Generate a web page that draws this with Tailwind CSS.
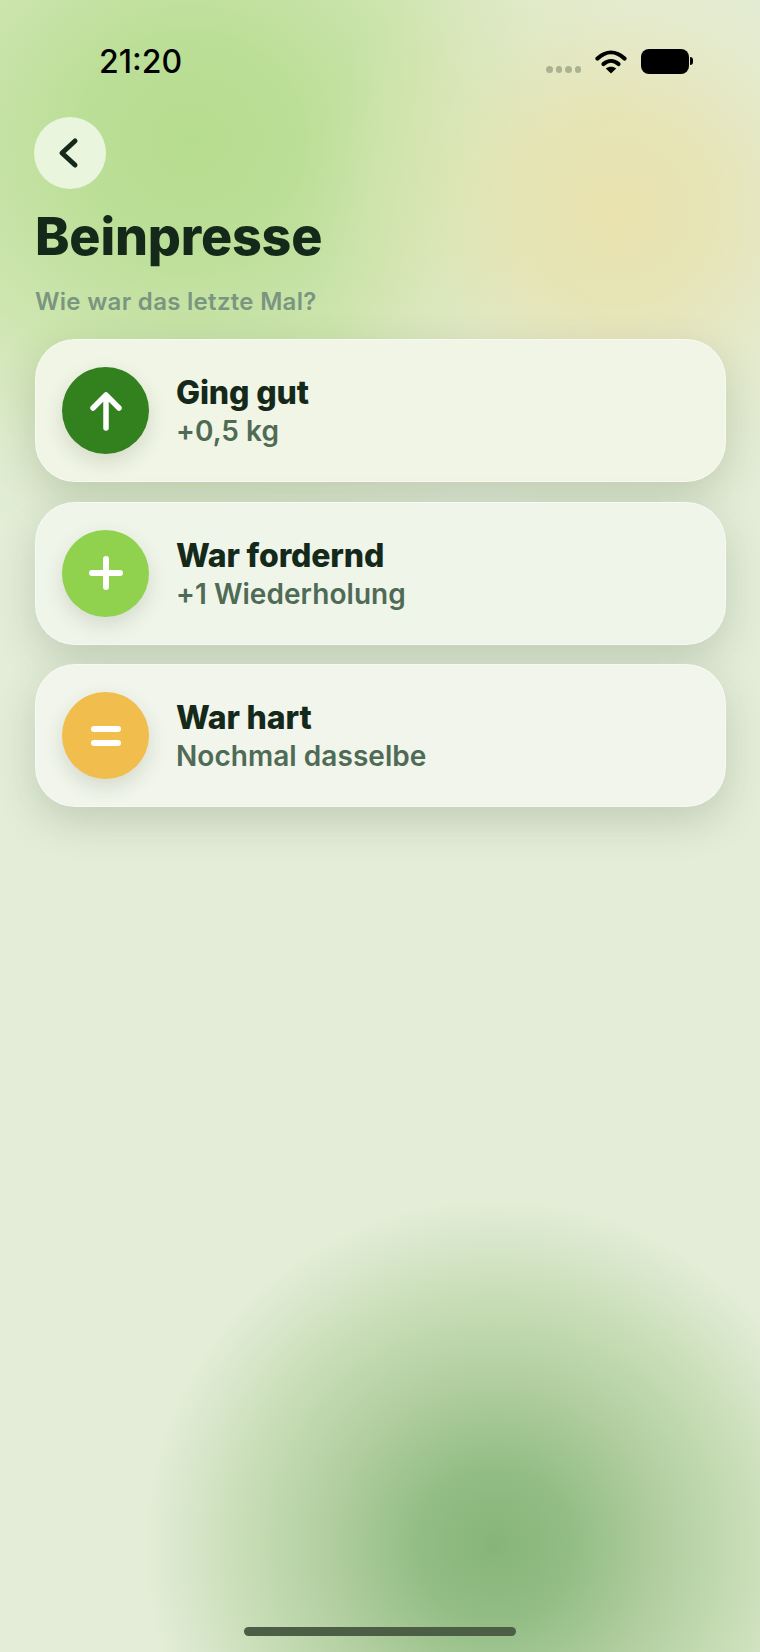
<!DOCTYPE html>
<html lang="de">
  <head>
    <meta charset="UTF-8" />
    <meta name="viewport" content="width=device-width, initial-scale=1.0" />
    <title>Beinpresse</title>
    <script src="https://cdn.jsdelivr.net/npm/@tailwindcss/browser@4"></script>
  </head>
  <body class="bg-[#e3edd8] font-['Inter',sans-serif]">
    <div class="relative w-[760px] h-[1652px] overflow-hidden">
      <!-- background blobs -->
      <div class="absolute left-[-270px] top-[-290px] w-[920px] h-[860px] rounded-full bg-[radial-gradient(closest-side,#b6dc8e_0%,#bcdf98_25%,#cbe4aae0_55%,#d8e9c070_80%,#e3edd800_100%)]"></div>
      <div class="absolute left-[310px] top-[-100px] w-[620px] h-[620px] rounded-full bg-[radial-gradient(closest-side,#e9e2ad_0%,#e8e3b0d0_30%,#e6e6bc60_65%,#e3edd800_100%)]"></div>
      <div class="absolute left-[145px] top-[1200px] w-[700px] h-[690px] rounded-full bg-[radial-gradient(closest-side,#86b579_0%,#93bd85_22%,#b4d0a2_50%,#cbdfba_75%,#e3edd800_100%)]"></div>

      <div class="relative flex flex-col">
        <!-- status bar -->
        <div class="flex items-center justify-between h-[117px] pt-[7px] pl-[99px] pr-[67px]">
          <span class="text-[32px] leading-none font-medium text-black">21:20</span>
          <div class="flex items-center -mt-[2px]">
            <div class="flex gap-[3px] mt-[17px] mr-[14px]">
              <span class="size-[6.5px] rounded-full bg-[#abb291]"></span>
              <span class="size-[6.5px] rounded-full bg-[#abb291]"></span>
              <span class="size-[6.5px] rounded-full bg-[#abb291]"></span>
              <span class="size-[6.5px] rounded-full bg-[#abb291]"></span>
            </div>
            <svg width="32" height="25" viewBox="0 0 32 25" class="mr-[14px]">
              <path d="M2.5 9.5C11 1.5 21 1.5 29.5 9.5" fill="none" stroke="#000" stroke-width="4.2" stroke-linecap="round" />
              <path d="M8.5 15C13 11 19 11 23.5 15" fill="none" stroke="#000" stroke-width="4.2" stroke-linecap="round" />
              <path d="M16 24.5L10.8 19.5C13.8 17 18.2 17 21.2 19.5Z" fill="#000" />
            </svg>
            <div class="w-[48px] h-[25px] rounded-[8px] bg-black"></div>
            <div class="w-[3px] h-[8px] rounded-r-full bg-black ml-[1px]"></div>
          </div>
        </div>

        <div class="flex flex-col px-[35px]">
          <button class="flex items-center justify-center size-[72px] -ml-[1px] rounded-full bg-[#eaf5dd]">
            <svg width="24" height="34" viewBox="0 0 24 34" class="mr-[6px]">
              <path d="M20 5L7 17L20 29" fill="none" stroke="#14291a" stroke-width="5" stroke-linecap="round" stroke-linejoin="round" />
            </svg>
          </button>
          <h1 class="mt-[17px] text-[52px] leading-[62px] font-extrabold tracking-[-0.2px] text-[#14291a]">Beinpresse</h1>
          <p class="mt-[19px] text-[24px] leading-[30px] font-semibold tracking-[0.3px] text-[#7a9580]">Wie war das letzte Mal?</p>

          <div class="mt-[22px] flex flex-col gap-[19.5px] w-[691px]">
            <div class="flex items-center gap-[27px] h-[143px] pl-[26px] rounded-[40px] border border-white/50 bg-[#f0f5e5] shadow-[0_14px_40px_rgba(60,80,50,0.2)]">
              <div class="flex items-center justify-center size-[87px] rounded-full bg-[#33801f] shadow-[0_8px_20px_rgba(40,60,30,0.14)]">
                <svg width="36" height="42" viewBox="0 0 36 42">
                  <path d="M18 38V6M5 18L18 5L31 18" fill="none" stroke="#fff" stroke-width="5.5" stroke-linecap="round" stroke-linejoin="round" />
                </svg>
              </div>
              <div class="flex flex-col pt-[3px]">
                <span class="text-[32px] leading-[39px] font-extrabold tracking-[-0.15px] text-[#14291a]">Ging gut</span>
                <span class="text-[28px] leading-[39px] font-semibold tracking-[0.05px] text-[#4f6b55]">+0,5 kg</span>
              </div>
            </div>

            <div class="flex items-center gap-[27px] h-[143px] pl-[26px] rounded-[40px] border border-white/50 bg-[#f0f5ea] shadow-[0_14px_40px_rgba(60,80,50,0.2)]">
              <div class="flex items-center justify-center size-[87px] rounded-full bg-[#90d24e] shadow-[0_8px_20px_rgba(40,60,30,0.14)]">
                <svg width="36" height="36" viewBox="0 0 36 36">
                  <path d="M18 4V32M4 18H32" fill="none" stroke="#fff" stroke-width="6" stroke-linecap="round" />
                </svg>
              </div>
              <div class="flex flex-col pt-[3px]">
                <span class="text-[32px] leading-[39px] font-extrabold tracking-[-0.15px] text-[#14291a]">War fordernd</span>
                <span class="text-[28px] leading-[39px] font-semibold tracking-[0.05px] text-[#4f6b55]">+1 Wiederholung</span>
              </div>
            </div>

            <div class="flex items-center gap-[27px] h-[143px] pl-[26px] rounded-[40px] border border-white/50 bg-[#f1f5eb] shadow-[0_14px_40px_rgba(60,80,50,0.2)]">
              <div class="flex flex-col items-center justify-center gap-[8px] size-[87px] rounded-full bg-[#f1bd4d] shadow-[0_8px_20px_rgba(40,60,30,0.14)]">
                <span class="w-[30px] h-[6px] rounded-full bg-white"></span>
                <span class="w-[30px] h-[6px] rounded-full bg-white"></span>
              </div>
              <div class="flex flex-col pt-[3px]">
                <span class="text-[32px] leading-[39px] font-extrabold tracking-[-0.15px] text-[#14291a]">War hart</span>
                <span class="text-[28px] leading-[39px] font-semibold tracking-[0.05px] text-[#4f6b55]">Nochmal dasselbe</span>
              </div>
            </div>
          </div>
        </div>
      </div>

      <!-- home indicator -->
      <div class="absolute left-[244px] top-[1627px] w-[272px] h-[9px] rounded-full bg-[#4c5f46]"></div>
    </div>
  </body>
</html>
